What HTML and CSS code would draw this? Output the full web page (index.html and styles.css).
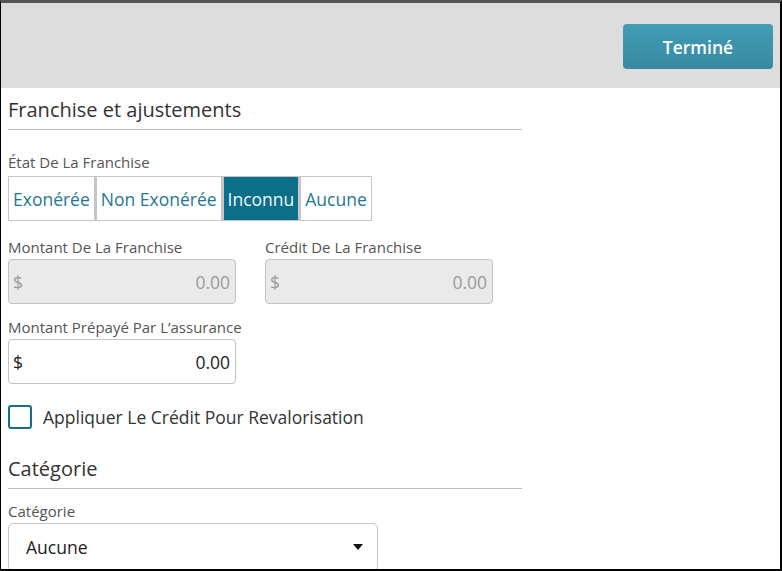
FILE: index.html
```html
<!DOCTYPE html>
<html lang="fr">
<head>
<meta charset="utf-8">
<link rel="stylesheet" href="styles.css">
</head>
<body>
<div class="frame">
  <header class="topbar">
    <button class="done">Terminé</button>
  </header>
  <main class="content">
    <h2 class="section-title">Franchise et ajustements</h2>
    <div class="field">
      <div class="label">État De La Franchise</div>
      <div class="segmented">
        <span class="seg">Exonérée</span>
        <span class="seg">Non Exonérée</span>
        <span class="seg active">Inconnu</span>
        <span class="seg">Aucune</span>
      </div>
    </div>
    <div class="row">
      <div class="field col">
        <div class="label">Montant De La Franchise</div>
        <div class="money disabled"><span>$</span><span>0.00</span></div>
      </div>
      <div class="field col">
        <div class="label">Crédit De La Franchise</div>
        <div class="money disabled"><span>$</span><span>0.00</span></div>
      </div>
    </div>
    <div class="field col prepaid">
      <div class="label">Montant Prépayé Par L’assurance</div>
      <div class="money"><span>$</span><span>0.00</span></div>
    </div>
    <label class="check">
      <span class="box"></span>
      <span class="check-text">Appliquer Le Crédit Pour Revalorisation</span>
    </label>
    <h2 class="section-title cat">Catégorie</h2>
    <div class="field cat-field">
      <div class="label">Catégorie</div>
      <div class="select">
        <span>Aucune</span>
        <svg class="caret" width="10" height="6" viewBox="0 0 10 6"><path d="M0 0H10L5 6Z" fill="#111"/></svg>
      </div>
    </div>
  </main>
</div>
</body>
</html>
```

FILE: styles.css
```css
* { box-sizing: border-box; }
html, body { margin: 0; padding: 0; background: #fff; }
body {
  font-family: "Open Sans", "Liberation Sans", sans-serif;
  color: #333;
}
.frame {
  width: 782px;
  height: 571px;
  border-top: 3px solid #555;
  border-left: 1px solid #000;
  border-right: 2px solid #000;
  border-bottom: 2px solid #000;
  overflow: hidden;
  background: #fff;
}
.topbar {
  height: 85px;
  background: #dddddd;
  display: flex;
  justify-content: flex-end;
  align-items: flex-start;
  padding: 21px 7px 0 0;
}
.done {
  width: 150px;
  height: 45px;
  border: none;
  border-radius: 4px;
  background: linear-gradient(#419db5, #3889a0);
  color: #fff;
  font-family: "Open Sans", "Liberation Sans", sans-serif;
  font-weight: 600;
  font-size: 17.5px;
  cursor: pointer;
}
.content {
  padding: 0 0 0 7px;
  width: 521px;
}
.section-title {
  margin: 8px 0 0 0;
  font-size: 20px;
  font-weight: 400;
  line-height: 28px;
  color: #333;
  padding-bottom: 5px;
  border-bottom: 1px solid #bdbdbd;
}
.label {
  font-size: 15px;
  line-height: 20px;
  color: #555;
  white-space: nowrap;
}
.field { margin-top: 22px; }
.segmented {
  display: flex;
  margin-top: 4px;
}
.seg {
  height: 45px;
  display: flex;
  align-items: center;
  padding: 0 4px;
  border: 1px solid #c6c6c6;
  font-size: 17.5px;
  color: #1f7893;
  background: #fff;
}
.seg + .seg { border-left-width: 2px; }
.seg.active {
  background: #0c6f89;
  color: #eef7fa;
  border-color: #c6c6c6;
}
.row {
  display: flex;
  gap: 29px;
}
.row .field { margin-top: 16px; }
.col { width: 228px; }
.prepaid.field { margin-top: 13px; }
.money {
  margin-top: 2px;
  height: 45px;
  border: 1px solid #c3c3c3;
  border-radius: 4px;
  display: flex;
  justify-content: space-between;
  align-items: center;
  padding: 0 5px 0 4px;
  font-size: 17.5px;
  color: #222;
  background: #fff;
}
.money.disabled {
  background: #ebeaea;
  color: #9a9a9a;
}
.check {
  display: flex;
  align-items: center;
  gap: 11px;
  margin-top: 21px;
}
.box {
  width: 24px;
  height: 24px;
  border: 2px solid #1b6e88;
  border-radius: 3px;
  background: #fff;
}
.check-text {
  font-size: 17.5px;
  color: #333;
}
.section-title.cat { margin-top: 26px; }
.cat-field.field { margin-top: 12px; }
.field .select { margin-top: 2px; }
.select {
  width: 370px;
  height: 48px;
  border: 1px solid #c6c6c6;
  border-radius: 5px;
  display: flex;
  align-items: center;
  justify-content: space-between;
  padding: 0 14px 0 17px;
  font-size: 17.5px;
  color: #222;
}
.caret { display: block; }
```
